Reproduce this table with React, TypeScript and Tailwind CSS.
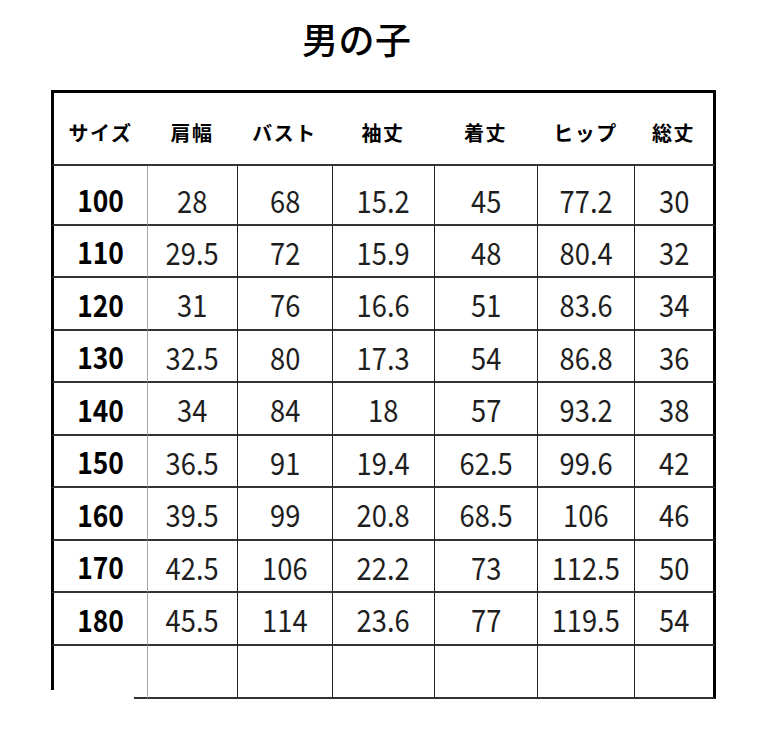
const headers = ['サイズ', '肩幅', 'バスト', '袖丈', '着丈', 'ヒップ', '総丈']

// サイズ表 (cm)
const rows = [
    ['100', '28', '68', '15.2', '45', '77.2', '30'],
    ['110', '29.5', '72', '15.9', '48', '80.4', '32'],
    ['120', '31', '76', '16.6', '51', '83.6', '34'],
    ['130', '32.5', '80', '17.3', '54', '86.8', '36'],
    ['140', '34', '84', '18', '57', '93.2', '38'],
    ['150', '36.5', '91', '19.4', '62.5', '99.6', '42'],
    ['160', '39.5', '99', '20.8', '68.5', '106', '46'],
    ['170', '42.5', '106', '22.2', '73', '112.5', '50'],
    ['180', '45.5', '114', '23.6', '77', '119.5', '54'],
]

const rowHeights = ['h-[60px]', 'h-[52px]', 'h-[53px]', 'h-[52px]', 'h-[53px]', 'h-[52px]', 'h-[53px]', 'h-[52px]', 'h-[53px]']

// borde de cada columna
const colBorder = [
    'border-l-[3px] border-l-black',
    'border-l border-l-[#a8a8a8]',
    'border-l border-l-[#222]',
    'border-l border-l-[#222]',
    'border-l border-l-[#222]',
    'border-l border-l-[#222]',
    'border-l border-l-[#222] border-r-[3px] border-r-black',
]

const font = { fontFamily: '"Noto Sans CJK JP", "Noto Sans", sans-serif' }

export default function App() {
    return (
        <div className="w-[763px] h-[750px] bg-white text-black" style={font}>

            {/* Título */}
            <div className="h-[90px] pt-[14px] pl-[302px]">
                <h1 className="text-[36px] leading-[48px] font-medium tracking-[0.5px]">男の子</h1>
            </div>

            {/* Tabla */}
            <div className="ml-[51px] w-[665px] border-t-[3px] border-black">
                <div className="grid grid-cols-[96px_90px_95px_102px_103px_97px_82px]">

                    {/* Header */}
                    {headers.map((h, i) => (
                        <div
                            key={h}
                            className={`h-[73px] pt-[9px] flex items-center justify-center border-b-2 border-b-[#333] ${i === 0 ? 'border-l-[3px] border-l-black' : ''} ${i === 6 ? 'border-r-[3px] border-r-black' : ''}`}
                        >
                            <span className="text-[20px] font-bold tracking-[1.5px]">{h}</span>
                        </div>
                    ))}

                    {/* Filas */}
                    {rows.map((row, r) =>
                        row.map((cell, c) => (
                            <div
                                key={`${r}-${c}`}
                                className={`${rowHeights[r]} ${r === 0 ? 'pt-[8px]' : ''} flex items-center justify-center border-b-2 border-b-[#333] ${colBorder[c]}`}
                            >
                                <span className={`inline-block scale-x-[0.88] leading-none ${c === 0 ? 'text-[30px] font-bold text-black' : 'text-[31px] font-normal text-[#1e1e1e]'}`}>
                                    {cell}
                                </span>
                            </div>
                        ))
                    )}

                    {/* Fila vacía */}
                    <div className="h-[53px] flex flex-col">
                        <div className="h-[44px] border-l-[3px] border-l-black" />
                        <div className="flex-1" />
                        <div className="ml-[83px] h-[2px] bg-[#333]" />
                    </div>
                    {colBorder.slice(1).map((b, i) => (
                        <div key={`e-${i}`} className={`h-[53px] border-b-2 border-b-[#333] ${b}`} />
                    ))}
                </div>
            </div>
        </div>
    )
}
